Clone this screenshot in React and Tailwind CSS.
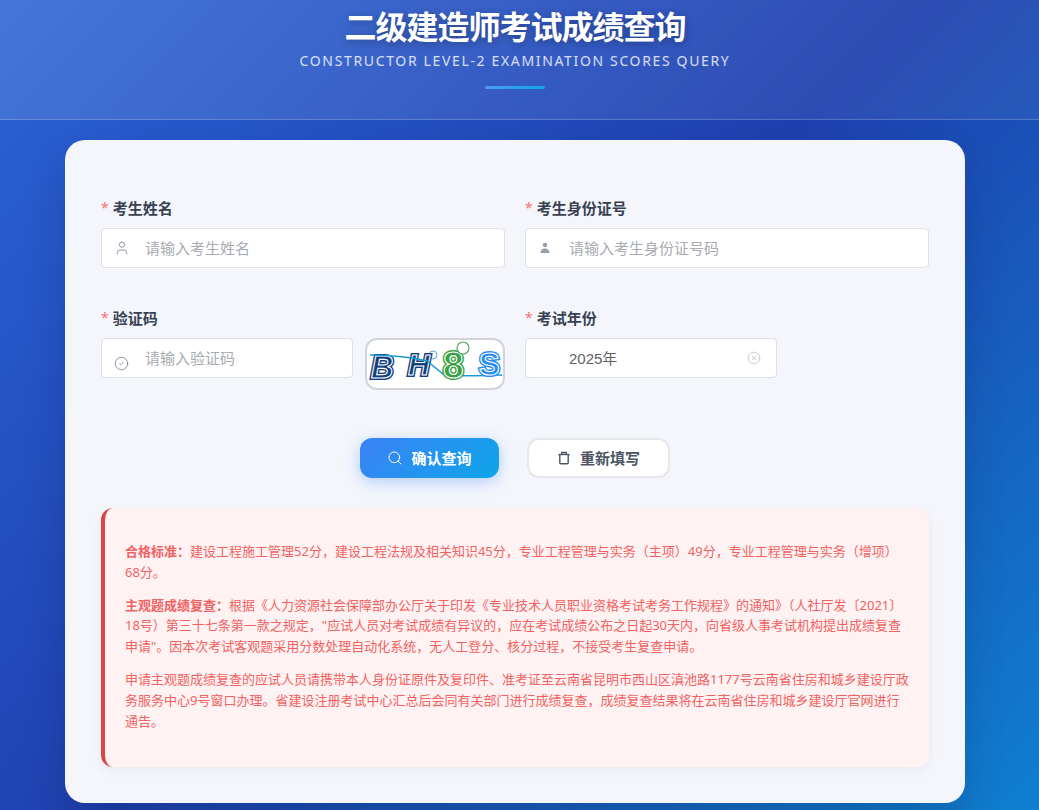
import React from "react";
import { Search, User, CircleCheck, CircleX } from "lucide-react";

const font = "font-['Noto_Sans','Noto_Sans_CJK_SC',sans-serif]";

function Label({ children }) {
  return (
    <div className="h-[20px] flex items-center text-[15px] leading-[20px] font-semibold text-[#374151] mb-[10px]">
      <span className="text-[#f87171] mr-[4px] font-normal text-[14px]">*</span>
      {children}
    </div>
  );
}

function Field({ icon, placeholder, value, right, className = "" }) {
  return (
    <div className={`relative h-[40px] bg-white border border-[#dcdfe6] rounded-[4px] flex items-center pl-[43px] text-[15px] ${className}`}>
      {icon}
      {value ? (
        <span className="pt-[2px] text-[#606266] font-['Liberation_Sans','Noto_Sans_CJK_SC',sans-serif]">{value}</span>
      ) : (
        <span className="text-[#a8abb2]">{placeholder}</span>
      )}
      {right}
    </div>
  );
}

function Captcha() {
  const letter = (ch, x, y, size, dark, italic) => (
    <g fontFamily="'Liberation Sans', sans-serif" fontWeight="700" fontSize={size} fontStyle={italic ? "italic" : "normal"}>
      <text x={x} y={y} fill="none" stroke={dark} strokeWidth="4">{ch}</text>
      <text x={x} y={y} fill={dark} stroke="#ffffff" strokeWidth="1.1">{ch}</text>
    </g>
  );
  return (
    <svg viewBox="0 0 136 48" className="block w-full h-full">
      <circle cx="66" cy="15" r="4" fill="none" stroke="#5fa8d8" strokeWidth="1" />
      {letter("B", 4, 38, 31, "#123f78", true)}
      {letter("H", 41, 35, 30, "#123f78", true)}
      <path d="M3 15 C 20 15, 46 17, 60 21 L 76 34 C 90 36, 115 36, 135 35" fill="none" stroke="#1c9ad6" strokeWidth="1.5" />
      {letter("8", 76, 38, 37, "#3aa043", false)}
      {letter("S", 112, 35, 31, "#2b8df0", false)}
      <circle cx="96" cy="8" r="6" fill="#fff" stroke="#55a860" strokeWidth="1.2" />
    </svg>
  );
}

function TrashIcon() {
  return (
    <svg width="14" height="14" viewBox="0 0 14 14" fill="none" stroke="#4b5563" strokeWidth="1.4">
      <path d="M1.500 3.500h11" />
      <path d="M4.800 3.500V1.500h4.400v2" />
      <path d="M2.800 3.500v8.200c0 .6.400 1 1 1h6.400c.6 0 1-.4 1-1V3.500" />
    </svg>
  );
}

function BadgeUser() {
  return (
    <svg width="14" height="14" viewBox="0 0 14 14" fill="#969eab">
      <circle cx="7" cy="4" r="2.200" />
      <path d="M2.500 12c0-3 1.900-4.600 4.500-4.600s4.500 1.600 4.500 4.600z" />
    </svg>
  );
}

export default function App() {
  return (
    <div className={`${font} w-[1039px] h-[810px] overflow-hidden bg-[linear-gradient(135deg,#2b63d6_0%,#1e40af_50%,#0f7fd0_100%)]`}>
      <div className="w-[1030px] h-[810px]">
        <header className="w-[1039px] h-[120px] border-b border-white/20 bg-[linear-gradient(135deg,rgba(255,255,255,0.12),rgba(255,255,255,0.05))]">
          <div className="w-[1030px] flex flex-col items-center pt-[7px]">
            <h1 className="text-[32px] leading-[40px] font-bold tracking-[-1px] text-white [text-shadow:0_2px_8px_rgba(0,0,0,0.3)]">
              二级建造师考试成绩查询
            </h1>
            <p className="mt-[3px] text-[14px] leading-[22px] tracking-[1.65px] text-white/80">
              CONSTRUCTOR LEVEL-2 EXAMINATION SCORES QUERY
            </p>
            <div className="mt-[14px] w-[60px] h-[3px] rounded-[2px] bg-[linear-gradient(90deg,#4f9cf0,#0ea5e9)]" />
          </div>
        </header>

        <main className="w-[900px] mx-auto mt-[20px] h-[663px] rounded-[20px] bg-[#f4f6fc] shadow-[0_20px_40px_rgba(0,0,0,0.15)] px-[36px] pt-[58px]">
          <div className="grid grid-cols-2 gap-x-[20px]">
            <div>
              <Label>考生姓名</Label>
              <Field
                placeholder="请输入考生姓名"
                icon={<User className="absolute left-[12px] top-[11px] text-[#8b93a1]" size={16} strokeWidth={1.4} />}
              />
            </div>
            <div>
              <Label>考生身份证号</Label>
              <Field
                placeholder="请输入考生身份证号码"
                icon={<span className="absolute left-[12px] top-[12px]"><BadgeUser /></span>}
              />
            </div>
          </div>

          <div className="grid grid-cols-2 gap-x-[20px] mt-[40px]">
            <div>
              <Label>验证码</Label>
              <div className="flex gap-[12px] items-start">
                <Field
                  className="w-[252px] shrink-0"
                  placeholder="请输入验证码"
                  icon={<CircleCheck className="absolute left-[12px] top-[17px] text-[#6b7280]" size={15} strokeWidth={1.2} />}
                />
                <div className="w-[140px] h-[52px] rounded-[12px] border-2 border-[#d1d5db] bg-white overflow-hidden">
                  <Captcha />
                </div>
              </div>
            </div>
            <div>
              <Label>考试年份</Label>
              <Field
                className="w-[252px]"
                value="2025年"
                right={<CircleX className="absolute right-[15px] top-[12px] text-[#a8abb2]" size={14} strokeWidth={1} />}
              />
            </div>
          </div>

          <div className="flex justify-center items-center gap-[28px] mt-[48px] h-[40px]">
            <button className="w-[139px] h-[40px] rounded-[12px] bg-[linear-gradient(135deg,#3b82f6,#0ea5e9)] text-white text-[15px] font-bold flex items-center justify-center gap-[8px] shadow-[0_4px_15px_rgba(59,130,246,0.35)]">
              <Search size={16} strokeWidth={1.5} />
              确认查询
            </button>
            <button className="w-[143px] h-[40px] rounded-[12px] bg-white border-2 border-[#e5e7eb] text-[#4b5563] text-[15px] font-bold flex items-center justify-center gap-[9px]">
              <TrashIcon />
              重新填写
            </button>
          </div>

          <section className="mt-[30px] h-[259px] rounded-[12px] border-l-4 border-[#dc4446] bg-[#fef2f2] shadow-[0_4px_12px_rgba(0,0,0,0.05)] pl-[20px] pr-[20px] pt-[33px] text-[13px] leading-[20.8px] text-[#f26262]">
            <p className="mb-[12px]">
              <strong className="font-bold">合格标准：</strong>
              建设工程施工管理52分，建设工程法规及相关知识45分，专业工程管理与实务（主项）49分，专业工程管理与实务（增项）68分。
            </p>
            <p className="mb-[12px]">
              <strong className="font-bold">主观题成绩复查：</strong>
              根据《人力资源社会保障部办公厅关于印发《专业技术人员职业资格考试考务工作规程》的通知》（人社厅发〔2021〕18号）第三十七条第一款之规定，"应试人员对考试成绩有异议的，应在考试成绩公布之日起30天内，向省级人事考试机构提出成绩复查申请"。因本次考试客观题采用分数处理自动化系统，无人工登分、核分过程，不接受考生复查申请。
            </p>
            <p>
              申请主观题成绩复查的应试人员请携带本人身份证原件及复印件、准考证至云南省昆明市西山区滇池路1177号云南省住房和城乡建设厅政务服务中心9号窗口办理。省建设注册考试中心汇总后会同有关部门进行成绩复查，成绩复查结果将在云南省住房和城乡建设厅官网进行通告。
            </p>
          </section>
        </main>
      </div>
    </div>
  );
}
